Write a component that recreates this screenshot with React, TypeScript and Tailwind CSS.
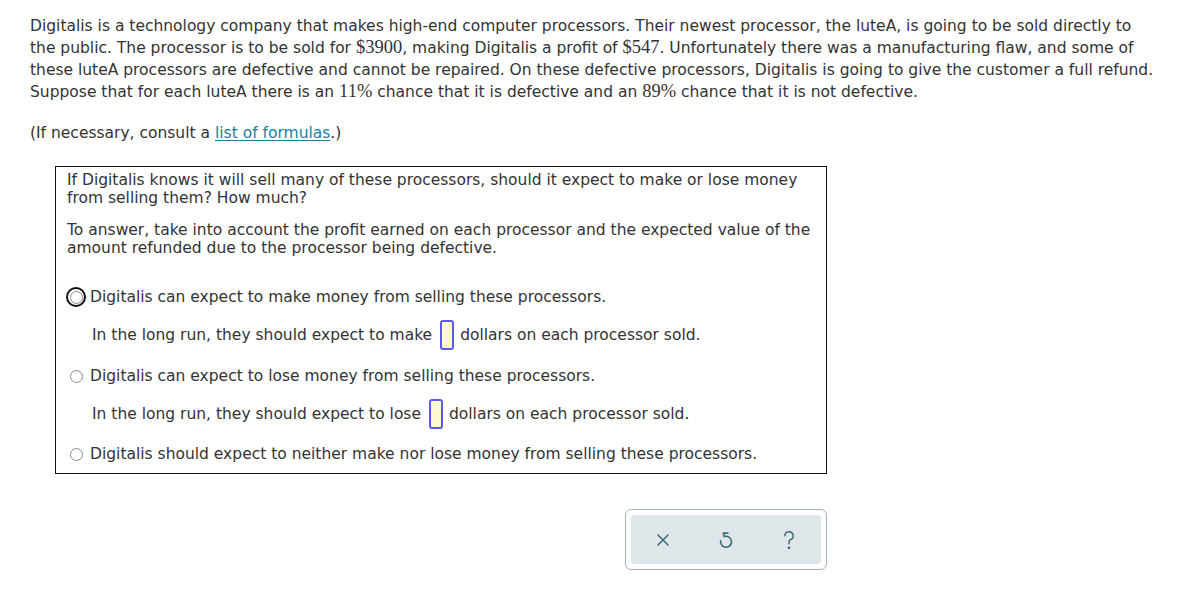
import React from "react";

const M = ({ children }: { children: React.ReactNode }) => (
  <span className="text-[18.5px] leading-[10px]" style={{ fontFamily: '"Liberation Serif", "DejaVu Serif", serif' }}>
    {children}
  </span>
);

const Radio = ({ selected }: { selected?: boolean }) => (
  <span className="w-[20px] h-[20px] flex items-center justify-center shrink-0">
    {selected ? (
      <span className="w-[20px] h-[20px] rounded-full border-2 border-[#111] flex items-center justify-center">
        <span className="w-[13px] h-[13px] rounded-full border border-[#888] bg-white" />
      </span>
    ) : (
      <span className="w-[13px] h-[13px] rounded-full border border-[#8a8a8a] bg-white" />
    )}
  </span>
);

const Blank = () => (
  <span className="inline-block w-[14px] h-[30px] rounded-[3px] border-2 border-[#5a5af0] bg-[#fff9d2] ml-[8px] mr-[6px] align-middle" />
);

export default function App() {
  return (
    <div
      className="w-[1192px] h-[589px] bg-white text-[#333] pl-[30px] pt-[15px]"
      style={{ fontFamily: '"DejaVu Sans", Verdana, sans-serif' }}
    >
      <p className="text-[15.5px] leading-[22px] whitespace-nowrap">
        Digitalis is a technology company that makes high-end computer processors. Their newest processor, the luteA, is going to be sold directly to
        <br />
        the public. The processor is to be sold for <M>$3900</M>, making Digitalis a profit of <M>$547</M>. Unfortunately there was a manufacturing flaw, and some of
        <br />
        these luteA processors are defective and cannot be repaired. On these defective processors, Digitalis is going to give the customer a full refund.
        <br />
        Suppose that for each luteA there is an <M>11%</M> chance that it is defective and an <M>89%</M> chance that it is not defective.
      </p>
      <p className="mt-[19px] text-[15.5px] leading-[22px]">
        (If necessary, consult a{" "}
        <span className="text-[#1b7f9e] underline underline-offset-2">list of formulas</span>.)
      </p>

      <div className="ml-[25px] mt-[22px] w-[772px]">
        <div className="border border-[#111] pl-[11px] pr-[11px] pt-[4px] pb-[8px] text-[15.5px] leading-[18px]">
          <p className="whitespace-nowrap">
            If Digitalis knows it will sell many of these processors, should it expect to make or lose money
            <br />
            from selling them? How much?
          </p>
          <p className="mt-[14px] whitespace-nowrap">
            To answer, take into account the profit earned on each processor and the expected value of the
            <br />
            amount refunded due to the processor being defective.
          </p>

          <div className="mt-[29px] h-[22px] flex items-center ml-[-1px]">
            <Radio selected />
            <span className="ml-[4px]">Digitalis can expect to make money from selling these processors.</span>
          </div>
          <div className="mt-[12px] h-[30px] flex items-center pl-[25px]">
            <span>In the long run, they should expect to make</span>
            <Blank />
            <span>dollars on each processor sold.</span>
          </div>
          <div className="mt-[15px] h-[22px] flex items-center ml-[-1px]">
            <Radio />
            <span className="ml-[4px]">Digitalis can expect to lose money from selling these processors.</span>
          </div>
          <div className="mt-[12px] h-[30px] flex items-center pl-[25px]">
            <span>In the long run, they should expect to lose</span>
            <Blank />
            <span>dollars on each processor sold.</span>
          </div>
          <div className="mt-[14px] h-[22px] flex items-center ml-[-1px]">
            <Radio />
            <span className="ml-[4px]">Digitalis should expect to neither make nor lose money from selling these processors.</span>
          </div>
        </div>

        <div className="mt-[35px] flex justify-end">
          <div className="w-[202px] h-[61px] rounded-[6px] border border-[#a3b6bd] p-[5px]">
            <div className="h-full rounded-[4px] bg-[#dfe6e9] grid grid-cols-3 items-center text-[#3e6b7a]">
              <div className="flex justify-center">
                <svg width="20" height="20" viewBox="0 0 24 24" fill="none" stroke="currentColor" strokeWidth="1.9" strokeLinecap="round">
                  <path d="M6 6 L18 18 M18 6 L6 18" />
                </svg>
              </div>
              <div className="flex justify-center">
                <svg width="22" height="22" viewBox="0 0 24 24" fill="none" stroke="currentColor" strokeWidth="1.8" strokeLinecap="round" strokeLinejoin="round">
                  <path d="M10.3 8.2 A6 6 0 1 1 6.1 13" />
                  <path d="M14 4.5 H9 L10.3 8.2" />
                </svg>
              </div>
              <div className="flex justify-center">
                <svg width="22" height="24" viewBox="0 0 24 26" fill="none" stroke="currentColor" strokeWidth="1.6" strokeLinecap="round">
                  <path d="M7.5 8.5 A4.5 4.5 0 1 1 13.5 12.7 C12.4 13.3 12 14 12 15.2 V17" />
                  <circle cx="12" cy="21.5" r="0.7" fill="currentColor" />
                </svg>
              </div>
            </div>
          </div>
        </div>
      </div>
    </div>
  );
}
